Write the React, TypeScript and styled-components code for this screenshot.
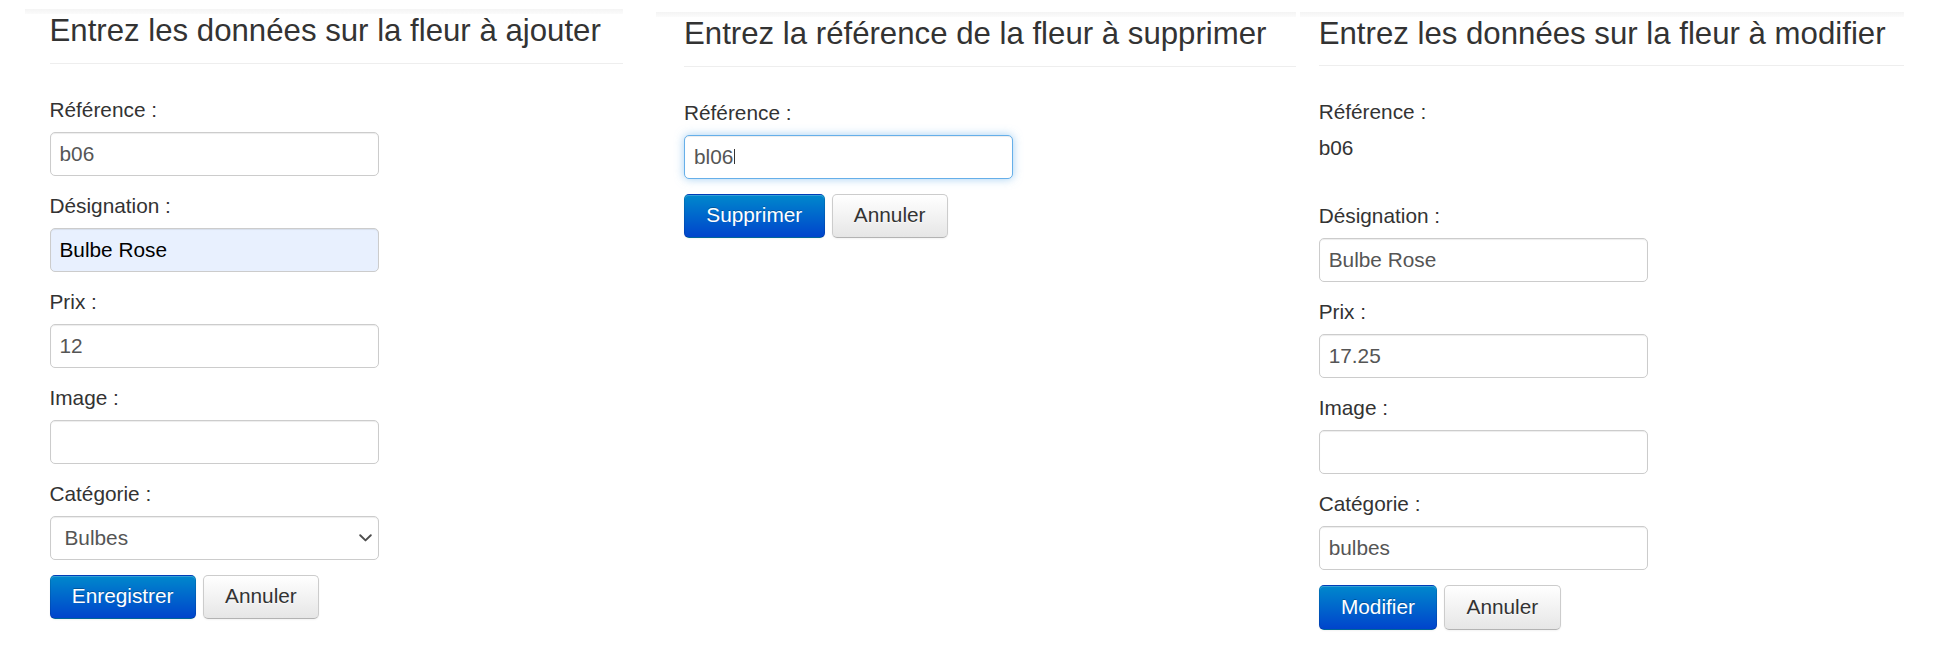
import React from 'react';
import styled, { createGlobalStyle, css } from 'styled-components';

const GlobalStyle = createGlobalStyle`
  html, body { margin: 0; padding: 0; background: #ffffff; }
  body {
    font-family: "Liberation Sans", Arial, Helvetica, sans-serif;
    color: #333333;
  }
  *, *::before, *::after { box-sizing: border-box; }
`;

const Page = styled.div`
  display: flex;
  align-items: flex-start;
  width: 1952px;
  height: 656px;
  padding-left: 25px;
  overflow: hidden;
`;

const Panel = styled.section<{ $width: number; $gap: number; $top: number }>`
  flex: none;
  width: ${(p) => p.$width}px;
  margin-left: ${(p) => p.$gap}px;
  padding-top: ${(p) => p.$top}px;
`;

const Band = styled.div`
  height: 5px;
  background: linear-gradient(to bottom, #f4f4f4, #fbfbfb);
`;

const Content = styled.div<{ $inset: number }>`
  padding-left: ${(p) => p.$inset}px;
`;

const Heading = styled.h3`
  margin: 0 0 34px;
  padding-bottom: 14px;
  border-bottom: 1px solid #eeeeee;
  font-size: 31.2px;
  line-height: 1.1;
  font-weight: 400;
  color: #333333;
  white-space: nowrap;
`;

const Form = styled.form`
  display: flex;
  flex-direction: column;
  align-items: flex-start;
`;

const FormGroup = styled.div`
  display: flex;
  flex-direction: column;
  align-items: flex-start;
  & + & {
    margin-top: 18px;
  }
`;

const Label = styled.label`
  display: block;
  font-size: 20.8px;
  line-height: 24px;
  margin-bottom: 10px;
  color: #333333;
`;

const fieldBase = css`
  width: 329px;
  height: 44px;
  margin: 0;
  padding: 0 9px;
  border: 1px solid #cccccc;
  border-radius: 5px;
  font-family: "Liberation Sans", Arial, Helvetica, sans-serif;
  font-size: 20.8px;
  line-height: 24px;
  color: #555555;
  background: #ffffff;
  box-shadow: inset 0 1px 1px rgba(0, 0, 0, 0.075);
  outline: none;
`;

const TextInput = styled.input<{ $autofill?: boolean }>`
  ${fieldBase}
  display: block;
  background: ${(p) => (p.$autofill ? '#e8f0fe' : '#ffffff')};
  color: ${(p) => (p.$autofill ? '#000000' : '#555555')};
`;

const FocusedField = styled.div`
  ${fieldBase}
  display: flex;
  align-items: center;
  border-color: #66afe9;
  box-shadow: inset 0 1px 1px rgba(0, 0, 0, 0.075), 0 0 10px rgba(102, 175, 233, 0.6);
`;

const Caret = styled.span`
  display: inline-block;
  width: 1px;
  height: 14.5px;
  margin-left: 1px;
  background: #333333;
  vertical-align: -4.4px;
`;

const SelectWrap = styled.div`
  position: relative;
  width: 329px;
`;

const Select = styled.select`
  ${fieldBase}
  display: block;
  appearance: none;
  -webkit-appearance: none;
  padding-left: 14px;
  padding-right: 30px;
`;

const Chevron = styled.svg`
  position: absolute;
  right: 6.8px;
  top: 50%;
  transform: translateY(-50%);
  pointer-events: none;
`;

const StaticValue = styled.div`
  height: 52px;
  padding-top: 1.5px;
  font-size: 20.8px;
  line-height: 24px;
  color: #333333;
`;

const ButtonRow = styled.div`
  display: flex;
  gap: 7px;
  margin-top: 15px;
`;

const Button = styled.button<{ $primary?: boolean }>`
  display: inline-flex;
  align-items: center;
  justify-content: center;
  height: 44.5px;
  margin: 0;
  padding: 0 21.3px 2px;
  border-radius: 5px;
  font-family: "Liberation Sans", Arial, Helvetica, sans-serif;
  font-size: 20.8px;
  line-height: 24px;
  cursor: pointer;
  ${(p) =>
    p.$primary
      ? css`
          color: #ffffff;
          text-shadow: 0 -1px 0 rgba(0, 0, 0, 0.25);
          background: linear-gradient(to bottom, #0088cc, #0044cc);
          border: 1px solid;
          border-color: rgba(0, 0, 0, 0.1) rgba(0, 0, 0, 0.1) rgba(0, 0, 0, 0.25);
          box-shadow: inset 0 1px 0 rgba(255, 255, 255, 0.2), 0 1px 2px rgba(0, 0, 0, 0.05);
        `
      : css`
          color: #333333;
          text-shadow: 0 1px 1px rgba(255, 255, 255, 0.75);
          background: linear-gradient(to bottom, #ffffff, #e6e6e6);
          border: 1px solid #cccccc;
          border-bottom-color: #b3b3b3;
          box-shadow: inset 0 1px 0 rgba(255, 255, 255, 0.2), 0 1px 2px rgba(0, 0, 0, 0.05);
        `}
`;

const ChevronIcon = () => (
  <Chevron width="13" height="8" viewBox="0 0 13 8" aria-hidden="true">
    <path d="M1.2 1.2 L6.5 6.4 L11.8 1.2" fill="none" stroke="#4d4d4d" strokeWidth="1.9" strokeLinecap="round" strokeLinejoin="round" />
  </Chevron>
);

const noop = (e: React.FormEvent) => e.preventDefault();

export default function App() {
  return (
    <>
      <GlobalStyle />
      <Page>
        <Panel $width={598} $gap={0} $top={9.3}>
          <Band />
          <Content $inset={24.5}>
            <Heading>Entrez les données sur la fleur à ajouter</Heading>
            <Form onSubmit={noop}>
              <FormGroup>
                <Label>Référence :</Label>
                <TextInput readOnly value="b06" />
              </FormGroup>
              <FormGroup>
                <Label>Désignation :</Label>
                <TextInput readOnly $autofill value="Bulbe Rose" />
              </FormGroup>
              <FormGroup>
                <Label>Prix :</Label>
                <TextInput readOnly value="12" />
              </FormGroup>
              <FormGroup>
                <Label>Image :</Label>
                <TextInput readOnly value="" />
              </FormGroup>
              <FormGroup>
                <Label>Catégorie :</Label>
                <SelectWrap>
                  <Select defaultValue="bulbes">
                    <option value="bulbes">Bulbes</option>
                    <option value="massif">Massif</option>
                    <option value="rosiers">Rosiers</option>
                  </Select>
                  <ChevronIcon />
                </SelectWrap>
              </FormGroup>
              <ButtonRow>
                <Button type="button" $primary>Enregistrer</Button>
                <Button type="button">Annuler</Button>
              </ButtonRow>
            </Form>
          </Content>
        </Panel>

        <Panel $width={640} $gap={33} $top={12.3}>
          <Band />
          <Content $inset={28}>
            <Heading>Entrez la référence de la fleur à supprimer</Heading>
            <Form onSubmit={noop}>
              <FormGroup>
                <Label>Référence :</Label>
                <FocusedField role="textbox">
                  <span>bl06</span>
                  <Caret />
                </FocusedField>
              </FormGroup>
              <ButtonRow>
                <Button type="button" $primary>Supprimer</Button>
                <Button type="button">Annuler</Button>
              </ButtonRow>
            </Form>
          </Content>
        </Panel>

        <Panel $width={604} $gap={4} $top={12}>
          <Band />
          <Content $inset={18.7}>
            <Heading>Entrez les données sur la fleur à modifier</Heading>
            <Form onSubmit={noop}>
              <FormGroup>
                <Label>Référence :</Label>
                <StaticValue>b06</StaticValue>
              </FormGroup>
              <FormGroup>
                <Label>Désignation :</Label>
                <TextInput readOnly value="Bulbe Rose" />
              </FormGroup>
              <FormGroup>
                <Label>Prix :</Label>
                <TextInput readOnly value="17.25" />
              </FormGroup>
              <FormGroup>
                <Label>Image :</Label>
                <TextInput readOnly value="" />
              </FormGroup>
              <FormGroup>
                <Label>Catégorie :</Label>
                <TextInput readOnly value="bulbes" />
              </FormGroup>
              <ButtonRow>
                <Button type="button" $primary>Modifier</Button>
                <Button type="button">Annuler</Button>
              </ButtonRow>
            </Form>
          </Content>
        </Panel>
      </Page>
    </>
  );
}
